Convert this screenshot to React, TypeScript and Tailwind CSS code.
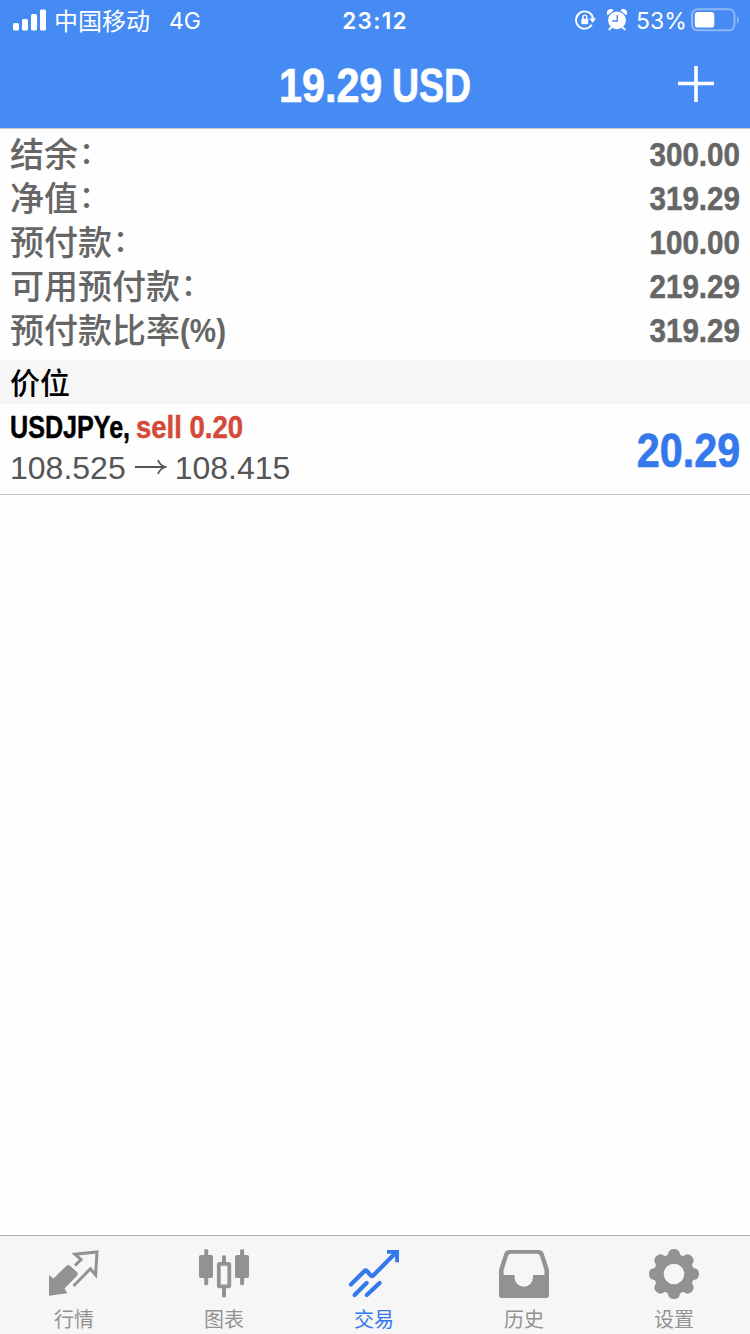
import React from "react";

type IconProps = { className?: string };

const SignalIcon = () => (
    <svg width="34" height="22" viewBox="0 0 34 22" fill="currentColor">
        <rect x="0" y="14" width="6" height="7.5" rx="1.5" />
        <rect x="9" y="10" width="6" height="11.5" rx="1.5" />
        <rect x="18" y="5" width="6" height="16.5" rx="1.5" />
        <rect x="27" y="0.5" width="6" height="21" rx="1.5" />
    </svg>
);

const RotationLockIcon = () => (
    <svg width="22" height="20" viewBox="0 0 22 20" fill="none" stroke="currentColor" strokeWidth="1.9">
        <path d="M16.8 14.8A8.6 8.6 0 1 1 18 8" />
        <path d="M14.2 8.2h7l-3.5 4.6z" fill="currentColor" stroke="none" />
        <rect x="6.4" y="8.8" width="6.8" height="5.4" rx="0.6" fill="currentColor" stroke="none" />
        <path d="M7.9 9.3V7a1.9 1.9 0 0 1 3.8 0v2.3" strokeWidth="1.4" />
    </svg>
);

const AlarmIcon = () => (
    <svg width="20" height="22" viewBox="0 0 20 22" fill="none">
        <circle cx="10" cy="11.3" r="8.9" fill="currentColor" />
        <path d="M.8 6.2A3.7 3.7 0 0 1 6.6 1.5zM19.2 6.2A3.7 3.7 0 0 0 13.4 1.5z" fill="currentColor" />
        <path d="M4.3 18.4l-2 2M15.7 18.4l2 2" stroke="currentColor" strokeWidth="2" strokeLinecap="round" />
        <path d="M10.3 6v6H5.2" stroke="#468bf3" strokeWidth="1.4" />
    </svg>
);

const BatteryIcon = () => (
    <svg width="48" height="24" viewBox="0 0 48 24" fill="none">
        <rect x="1" y="1.3" width="42.5" height="21" rx="5.5" stroke="#8db8f8" strokeWidth="2" />
        <rect x="3.8" y="4" width="19.5" height="15.6" rx="3.2" fill="white" />
        <path d="M46 8.2c2.4 1.3 2.4 6.3 0 7.6z" fill="#8db8f8" />
    </svg>
);

const QuotesIcon = ({ className }: IconProps) => (
    <svg width="52" height="50" viewBox="0 0 52 50" className={className}>
        <path d="M1 26l4.5 3.5L18 17.2c1.6-1.5 3-1.5 4.600 0l6 5.600c1.600 1.500 1.600 2.800 0 4.400L16.500 39.500l2.800 4.800L1 46.800z" fill="currentColor" />
        <path d="M27 16.500l6-6-6-5.300L49 3l-1.400 23-5.200-6.200L25.500 37" fill="none" stroke="currentColor" strokeWidth="3" />
    </svg>
);

const ChartIcon = ({ className }: IconProps) => (
    <svg width="52" height="50" viewBox="0 0 52 50" fill="currentColor" className={className}>
        <rect x="6.2" y="0.2" width="4" height="36" rx="1.4" />
        <rect x="1" y="6" width="14" height="23" rx="1.8" />
        <rect x="42.1" y="0.2" width="4" height="36" rx="1.4" />
        <rect x="37" y="6" width="14" height="23" rx="1.8" />
        <path d="M24 14V7.5q0-1.3 2-1.3t2 1.3V14zM24 38v9q0 1.5 2 1.5t2-1.5v-9z" />
        <rect x="20.8" y="14.8" width="10.5" height="22.5" rx="0.8" fill="none" stroke="currentColor" strokeWidth="3.8" />
    </svg>
);

const TradeIcon = ({ className }: IconProps) => (
    <svg width="52" height="50" viewBox="0 0 52 50" fill="none" stroke="currentColor" strokeWidth="4.2" strokeLinecap="round" className={className}>
        <path d="M2.900 35.500L16.500 22q1.200-1.200 2.300 0l4.200 4.600q1 1.200 2.200 0L46.500 5" />
        <path d="M6.600 46L18.600 34M18.800 46L31.600 34" />
        <path d="M39 .9h12v12.300h-3.800V8.500L43.500 4.700H39z" fill="currentColor" stroke="none" />
    </svg>
);

const HistoryIcon = ({ className }: IconProps) => (
    <svg width="52" height="50" viewBox="0 0 52 50" fillRule="evenodd" fill="currentColor" className={className}>
        <path d="M11.5 1h29q3.500 0 5 3l5 15q.5 1.500.5 3v24q0 3-3 3H4q-3 0-3-3V22q0-1.500.5-3l5-15Q8 1 11.500 1zM13 4.800q-2.200 0-3 2.200L5.600 21v5h11v2.500a9.200 9.200 0 0 0 18.400 0V26h11.400v-5L42 7Q41.200 4.800 39 4.800z" />
    </svg>
);

const SettingsIcon = ({ className }: IconProps) => (
    <svg width="52" height="52" viewBox="0 0 52 52" className={className}>
        <g fill="currentColor">
            {[0, 45, 90, 135, 180, 225, 270, 315].map((angle) => (
                <path key={angle} d="M16 11q3.300-1.500 4.200-5.500Q21 1 26 1t5.800 4.500Q32.700 9.500 36 11z" transform={`rotate(${angle} 26 26)`} />
            ))}
            <path fillRule="evenodd" d="M26 6a20 20 0 1 0 0 40 20 20 0 0 0 0-40zm0 9.700a10.300 10.300 0 1 1 0 20.600 10.300 10.300 0 0 1 0-20.600z" />
        </g>
    </svg>
);

const summary = [
    { label: "结余", colon: true, value: "300.00" },
    { label: "净值", colon: true, value: "319.29" },
    { label: "预付款", colon: true, value: "100.00" },
    { label: "可用预付款", colon: true, value: "219.29" },
    { label: "预付款比率", colon: false, value: "319.29" },
];

const tabs = [
    { label: "行情", Icon: QuotesIcon, iconClass: "mt-px" },
    { label: "图表", Icon: ChartIcon, iconClass: "mt-px" },
    { label: "交易", Icon: TradeIcon, iconClass: "mt-px", active: true },
    { label: "历史", Icon: HistoryIcon, iconClass: "mt-px" },
    { label: "设置", Icon: SettingsIcon },
];

const StatusBar = () => (
    <div className="grid h-10 grid-cols-3 items-center font-['Inter','Noto_Sans_CJK_SC',sans-serif]">
        <div className="flex items-center pl-[13px]">
            <SignalIcon />
            <span className="ml-[7px] pt-[3px] text-[24px] leading-none">中国移动</span>
            <span className="ml-[19px] pt-[2px] text-[23px] leading-none">4G</span>
        </div>
        <div className="pt-[2px] text-center text-[22.5px] font-semibold leading-none tracking-[1.3px]">23:12</div>
        <div className="flex items-center justify-end pr-[11px]">
            <RotationLockIcon />
            <span className="ml-[10px]"><AlarmIcon /></span>
            <span className="ml-[9px] mr-[5px] w-[50px] whitespace-nowrap pt-[2px] text-[23px] leading-none">53%</span>
            <BatteryIcon />
        </div>
    </div>
);

const Summary = () => (
    <section className="h-[231px] px-[10px] pt-[3px] text-[34px] text-[#666]">
        {summary.map(({ label, colon, value }) => (
            <div key={label} className="flex h-11 items-center justify-between leading-none">
                <div className="flex items-center font-medium">
                    <span className="pt-[2px]">{label}</span>
                    {colon ? (
                        <span className="-mt-[2px] ml-px text-[30px]">：</span>
                    ) : (
                        <span className="origin-left scale-x-[0.87] font-bold">(%)</span>
                    )}
                </div>
                <span className="-mt-px origin-right scale-x-[0.87] font-bold [-webkit-text-stroke:0.5px]">{value}</span>
            </div>
        ))}
    </section>
);

const Position = () => (
    <div className="flex h-[91px] items-center justify-between border-b border-[#c8c7cc] px-[10px]">
        <div className="-mt-[2px]">
            <div className="flex h-[40px] items-center whitespace-nowrap text-[32px] font-bold leading-none [-webkit-text-stroke:0.5px]">
                <span className="w-[126px] origin-left scale-x-[0.785] text-black">USDJPYe,</span>
                <span className="origin-left scale-x-[0.86] text-[#d44a3a]">sell 0.20</span>
            </div>
            <div className="flex h-[42px] items-center text-[32px] leading-none text-[#555]">
                <span>108.525</span>
                <svg width="32" height="18" viewBox="0 0 32 18" fill="none" stroke="currentColor" strokeWidth="1.8" className="ml-[9px] mr-[8px] -mt-[2px]">
                    <path d="M0 9h30M23 2q2 5.500 7.500 7Q25 10.500 23 16" />
                </svg>
                <span>108.415</span>
            </div>
        </div>
        <span className="origin-right scale-x-[0.86] pt-[4px] text-[48px] font-bold leading-none text-[#3478ec] [-webkit-text-stroke:0.7px]">20.29</span>
    </div>
);

const TabBar = () => (
    <nav className="grid h-[99px] grid-cols-5 border-t border-[#b2b2b2] bg-[#f6f6f6]">
        {tabs.map(({ label, Icon, iconClass, active }) => (
            <div key={label} className={`flex flex-col items-center pr-[2px] pt-[12px] ${active ? "text-[#3478ec]" : "text-[#929292]"}`}>
                <div className="h-[60px]"><Icon className={iconClass} /></div>
                <span className="text-[20px] leading-[24px]">{label}</span>
            </div>
        ))}
    </nav>
);

export default function App() {
    return (
        <div className="flex h-[1334px] w-[750px] flex-col overflow-hidden bg-[#fefefe] font-['Liberation_Sans','Noto_Sans_CJK_SC',sans-serif]">
            <header className="h-[129px] border-b border-[#c3cad5] bg-[#468bf3] text-white">
                <StatusBar />
                <div className="grid h-[88px] grid-cols-[1fr_192px_1fr] items-center">
                    <h1 className="col-start-2 flex whitespace-nowrap pt-[4px] text-[48px] font-bold leading-none [-webkit-text-stroke:0.7px]">
                        <span className="w-[113px] origin-left scale-x-[0.86]">19.29</span>{" "}
                        <span className="origin-left scale-x-[0.78]">USD</span>
                    </h1>
                    <svg width="36" height="36" viewBox="0 0 36 36" stroke="currentColor" strokeWidth="3.6" className="mr-[36px] justify-self-end">
                        <path d="M0 17.500h36M18 0v36" />
                    </svg>
                </div>
            </header>
            <main className="flex-1">
                <Summary />
                <h2 className="flex h-11 items-center bg-[#f6f6f6] pl-[10px] pt-[3px] text-[30px] font-medium leading-none text-black">价位</h2>
                <Position />
            </main>
            <TabBar />
        </div>
    );
}
